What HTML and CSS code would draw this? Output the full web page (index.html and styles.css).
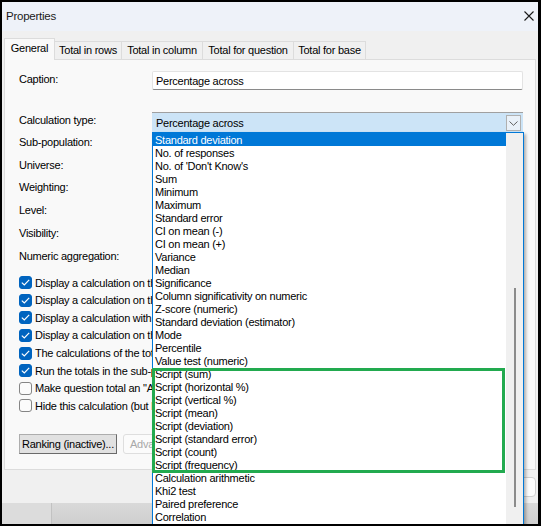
FILE: index.html
```html
<!DOCTYPE html>
<html>
<head>
<meta charset="utf-8">
<link rel="stylesheet" href="styles.css">
</head>
<body>
<div class="window">
  <div class="titlebar">
    <span class="title">Properties</span>
    <svg class="close" width="10" height="10" viewBox="0 0 10 10"><path d="M0.5 0.5 L9.5 9.5 M9.5 0.5 L0.5 9.5" stroke="#1a1a1a" stroke-width="1.1" fill="none"/></svg>
  </div>
  <div class="body">
    <div class="tabs">
      <div class="tab active">General</div>
      <div class="tab">Total in rows</div>
      <div class="tab">Total in column</div>
      <div class="tab">Total for question</div>
      <div class="tab">Total for base</div>
    </div>
    <div class="panel">
      <div class="row caption-row">
        <span class="lbl">Caption:</span>
        <div class="textbox">Percentage across</div>
      </div>
      <div class="row calc-row">
        <span class="lbl">Calculation type:</span>
        <div class="combo">
          <span class="combo-text">Percentage across</span>
          <span class="combo-btn"><svg width="9" height="5" viewBox="0 0 9 5"><path d="M0.5 0.5 L4.5 4.3 L8.5 0.5" stroke="#606060" stroke-width="1" fill="none"/></svg></span>
        </div>
      </div>
      <div class="fields">
        <div class="field">Sub-population:</div>
        <div class="field">Universe:</div>
        <div class="field">Weighting:</div>
        <div class="field">Level:</div>
        <div class="field">Visibility:</div>
        <div class="field">Numeric aggregation:</div>
      </div>
      <div class="checks">
        <div class="check"><span class="box on"><svg width="9" height="7" viewBox="0 0 9 7"><path d="M0.8 3.6 L3.3 6 L8.2 0.9" stroke="#fff" stroke-width="1.2" fill="none"/></svg></span><span>Display a calculation on the rows</span></div>
        <div class="check"><span class="box on"><svg width="9" height="7" viewBox="0 0 9 7"><path d="M0.8 3.6 L3.3 6 L8.2 0.9" stroke="#fff" stroke-width="1.2" fill="none"/></svg></span><span>Display a calculation on the columns</span></div>
        <div class="check"><span class="box on"><svg width="9" height="7" viewBox="0 0 9 7"><path d="M0.8 3.6 L3.3 6 L8.2 0.9" stroke="#fff" stroke-width="1.2" fill="none"/></svg></span><span>Display a calculation with the bases</span></div>
        <div class="check"><span class="box on"><svg width="9" height="7" viewBox="0 0 9 7"><path d="M0.8 3.6 L3.3 6 L8.2 0.9" stroke="#fff" stroke-width="1.2" fill="none"/></svg></span><span>Display a calculation on the total</span></div>
        <div class="check"><span class="box on"><svg width="9" height="7" viewBox="0 0 9 7"><path d="M0.8 3.6 L3.3 6 L8.2 0.9" stroke="#fff" stroke-width="1.2" fill="none"/></svg></span><span>The calculations of the totals are done on the data</span></div>
        <div class="check"><span class="box on"><svg width="9" height="7" viewBox="0 0 9 7"><path d="M0.8 3.6 L3.3 6 L8.2 0.9" stroke="#fff" stroke-width="1.2" fill="none"/></svg></span><span>Run the totals in the sub-population</span></div>
        <div class="check"><span class="box"></span><span>Make question total an "All" total</span></div>
        <div class="check"><span class="box"></span><span>Hide this calculation (but keep it)</span></div>
      </div>
      <div class="buttons">
        <button class="btn">Ranking (inactive)...</button>
        <button class="btn disabled">Advanced settings...</button>
      </div>
    </div>
    <div class="footer">
      <button class="fbtn">OK</button>
      <button class="fbtn">Cancel</button>
    </div>
    <div class="strip"><div class="strip-seg"></div></div>
  </div>

  <div class="dropdown">
    <div class="items">
      <div class="item sel">Standard deviation</div>
      <div class="item">No. of responses</div>
      <div class="item">No. of 'Don't Know's</div>
      <div class="item">Sum</div>
      <div class="item">Minimum</div>
      <div class="item">Maximum</div>
      <div class="item">Standard error</div>
      <div class="item">CI on mean (-)</div>
      <div class="item">CI on mean (+)</div>
      <div class="item">Variance</div>
      <div class="item">Median</div>
      <div class="item">Significance</div>
      <div class="item">Column significativity on numeric</div>
      <div class="item">Z-score (numeric)</div>
      <div class="item">Standard deviation (estimator)</div>
      <div class="item">Mode</div>
      <div class="item">Percentile</div>
      <div class="item">Value test (numeric)</div>
      <div class="item">Script (sum)</div>
      <div class="item">Script (horizontal %)</div>
      <div class="item">Script (vertical %)</div>
      <div class="item">Script (mean)</div>
      <div class="item">Script (deviation)</div>
      <div class="item">Script (standard error)</div>
      <div class="item">Script (count)</div>
      <div class="item">Script (frequency)</div>
      <div class="item">Calculation arithmetic</div>
      <div class="item">Khi2 test</div>
      <div class="item">Paired preference</div>
      <div class="item">Correlation</div>
    </div>
    <div class="scrollbar"><div class="thumb"></div></div>
  </div>
  <div class="mark"></div>
</div>
</body>
</html>
```

FILE: styles.css
```css
html, body {
  margin: 0;
  padding: 0;
  background: #000;
}
.window {
  position: relative;
  width: 541px;
  height: 526px;
  box-sizing: border-box;
  border: 2px solid #000;
  border-right-width: 3px;
  overflow: hidden;
  background: #f0f0f0;
  font-family: "Liberation Sans", Arial, sans-serif;
  font-size: 11px;
  letter-spacing: -0.25px;
  color: #000;
}
.titlebar {
  height: 29px;
  background: #eef2f9;
  display: flex;
  align-items: center;
  justify-content: space-between;
  padding: 0 4px 2px 4px;
  box-sizing: border-box;
}
.title {
  font-size: 11.5px;
  color: #1a1a1a;
}
.body {
  padding: 7px 2px 0 2px;
}
.tabs {
  display: flex;
  align-items: flex-end;
  height: 21px;
}
.tab {
  height: 18px;
  box-sizing: border-box;
  border: 1px solid #dcdcdc;
  border-bottom: none;
  border-left: none;
  display: flex;
  align-items: center;
  justify-content: center;
  padding-bottom: 1px;
  background: #f0f0f0;
  white-space: nowrap;
}
.tab:nth-child(2) { width: 67px; }
.tab:nth-child(3) { width: 81px; }
.tab:nth-child(4) { width: 91px; }
.tab:nth-child(5) { width: 72px; }
.tab.active {
  width: 51px;
  height: 22px;
  margin-bottom: -1px;
  border-left: 1px solid #dcdcdc;
  background: #f9f9f9;
  padding-bottom: 3px;
  position: relative;
  z-index: 1;
}
.panel {
  height: 411px;
  box-sizing: border-box;
  border: 1px solid #dcdcdc;
  background: #f9f9f9;
  padding: 0 0 0 14px;
}
.row {
  display: flex;
  align-items: center;
}
.lbl {
  width: 133px;
  padding-bottom: 4px;
  flex: none;
}
.caption-row {
  margin-top: 11px;
  height: 19px;
}
.textbox {
  width: 371px;
  height: 19px;
  box-sizing: border-box;
  background: #fff;
  border: 1px solid #e3e3e3;
  border-bottom: 1px solid #8a8a8a;
  border-radius: 2px;
  padding: 0 3px;
  display: flex;
  align-items: center;
}
.calc-row {
  margin-top: 22px;
  height: 20px;
}
.combo {
  width: 371px;
  height: 20px;
  box-sizing: border-box;
  background: #cce4f7;
  border-top: 1px solid #a0a0a0;
  display: flex;
  align-items: center;
  justify-content: space-between;
  padding: 0 2px 0 4px;
}
.combo-btn {
  width: 15px;
  height: 16px;
  box-sizing: border-box;
  border: 1px solid #b0b0b0;
  background: #e9f1f9;
  display: flex;
  align-items: center;
  justify-content: center;
  padding-top: 2px;
}
.fields {
  margin-top: -1.5px;
}
.field {
  height: 22.8px;
  display: flex;
  align-items: center;
}
.checks {
  margin-top: 6.6px;
}
.check {
  height: 17.6px;
  display: flex;
  align-items: center;
  gap: 3px;
  white-space: nowrap;
}
.box {
  width: 13px;
  height: 13px;
  box-sizing: border-box;
  border-radius: 3px;
  border: 1px solid #858585;
  background: #fbfbfb;
  display: flex;
  align-items: center;
  justify-content: center;
  flex: none;
}
.box.on {
  background: #0064bf;
  border-color: #0064bf;
}
.buttons {
  margin-top: 19.3px;
  display: flex;
  gap: 6px;
}
.btn {
  height: 20px;
  padding: 0 2px;
  font: inherit;
  letter-spacing: inherit;
  color: #000;
  background: #e1e1e1;
  border: 1px solid #adadad;
  border-right-color: #6a6a6a;
  border-bottom-color: #6a6a6a;
  border-radius: 0;
  white-space: nowrap;
}
.btn.disabled {
  color: #a8a8a8;
  background: #fbfbfb;
  border: 1px solid #dedede;
  border-radius: 3px;
  padding: 0 6px;
  width: 120px;
  text-align: left;
}
.footer {
  height: 33px;
  display: flex;
  justify-content: flex-end;
  align-items: flex-start;
  gap: 8px;
}
.fbtn {
  margin-top: 7px;
  width: 75px;
  height: 20px;
  font: inherit;
  letter-spacing: inherit;
  background: #fdfdfd;
  border: 1px solid #d0d0d0;
  border-radius: 4px;
}
.strip {
  height: 21px;
  margin: 0 -2px;
  background: linear-gradient(#d9d9d9, #cfcfcf);
  display: flex;
}
.strip-seg {
  width: 49px;
  border-right: 1px solid #c2c2c2;
  background: #dcdcdc;
}
.dropdown {
  position: absolute;
  left: 150px;
  top: 130px;
  width: 372px;
  height: 400px;
  box-sizing: border-box;
  border: 1px solid #0078d7;
  background: #fff;
  display: flex;
  box-shadow: 2px 2px 3px rgba(0, 0, 0, 0.3);
  z-index: 5;
}
.items {
  flex: 1;
}
.item {
  height: 13px;
  line-height: 15px;
  padding-left: 2px;
  white-space: nowrap;
}
.item.sel {
  background: #0078d7;
  color: #fff;
}
.scrollbar {
  width: 17px;
  background: #f0f0f0;
  position: relative;
}
.thumb {
  position: absolute;
  left: 8px;
  top: 155px;
  width: 2px;
  height: 219px;
  background: #8b8b8b;
}
.mark {
  position: absolute;
  left: 150px;
  top: 366px;
  width: 353px;
  height: 105px;
  box-sizing: border-box;
  border: 3px solid #22aa4f;
  z-index: 6;
}
```
